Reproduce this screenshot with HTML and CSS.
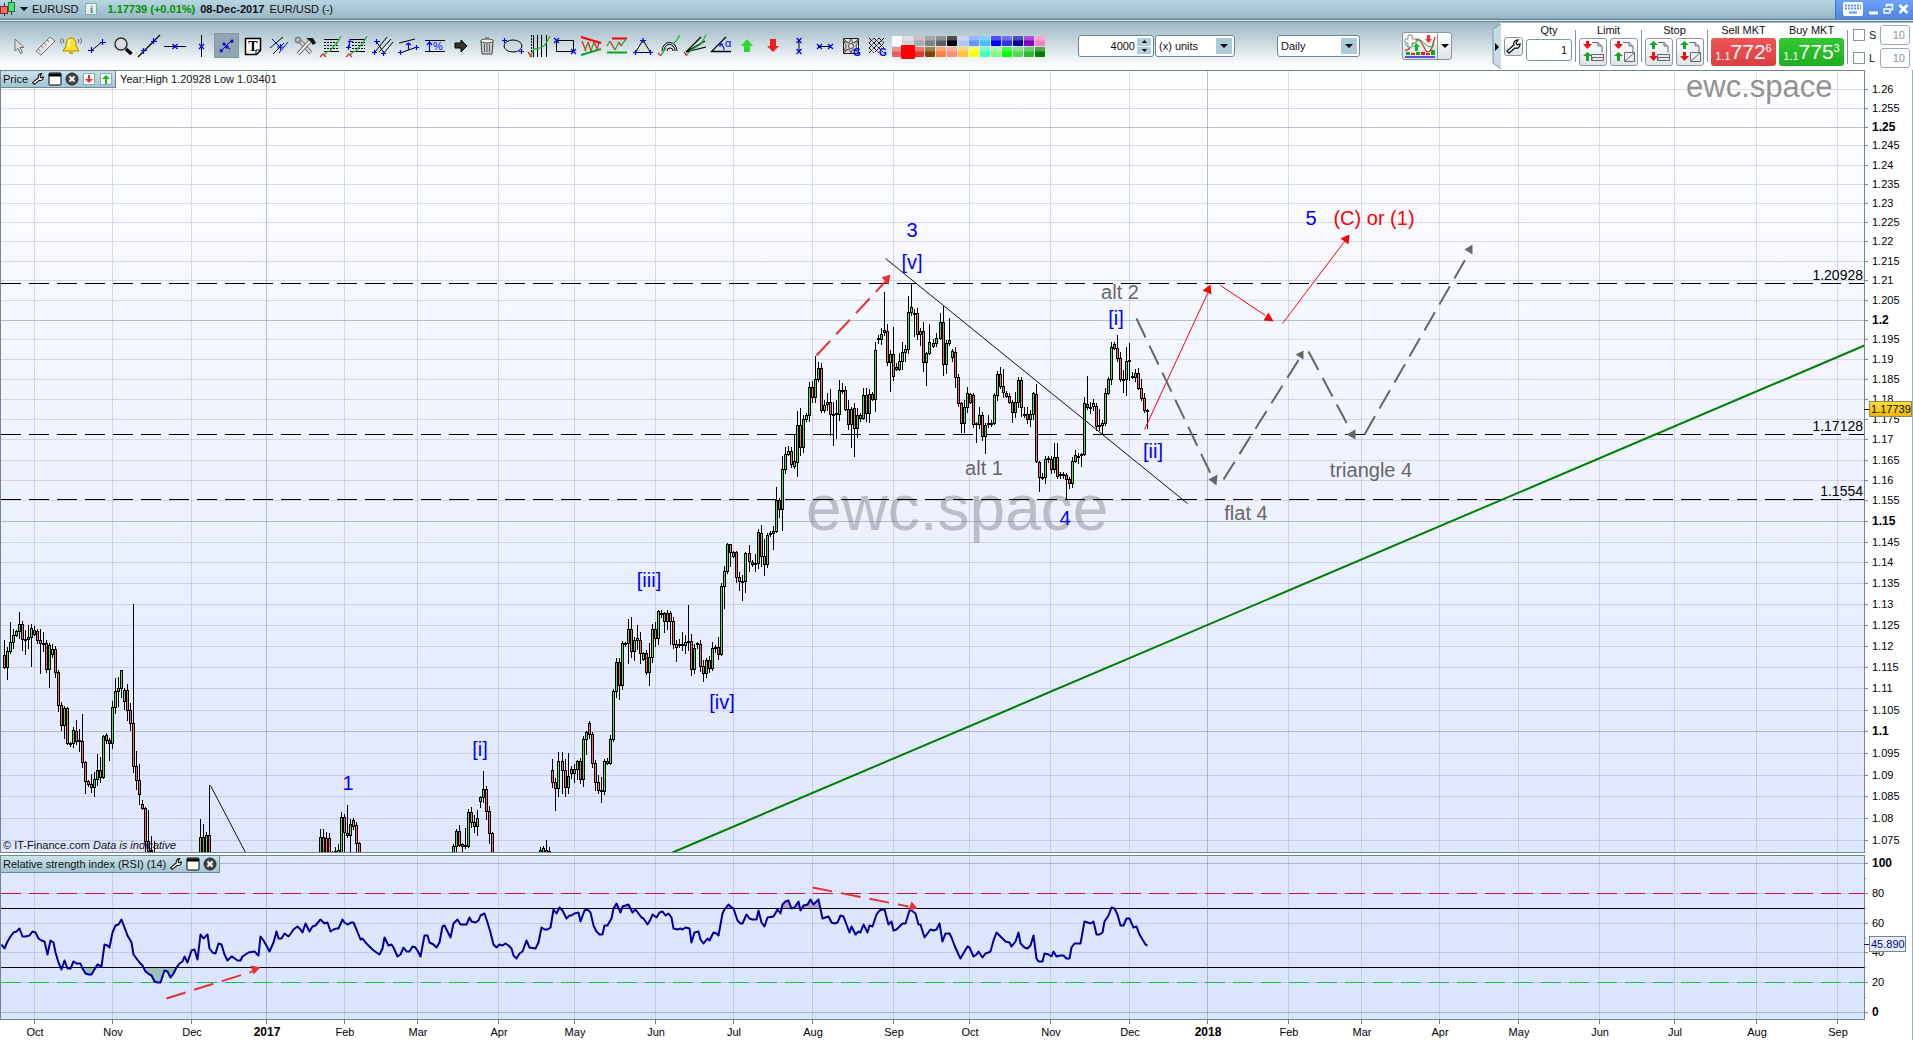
FILE: index.html
```html
<!DOCTYPE html>
<html lang="en">
	<head>
		<meta charset="utf-8">
		<title>EURUSD</title>
		<link rel="stylesheet" href="styles.css">
	</head>
	<body>
		<header class="titlebar">
			<svg class="candle-logo" width="18" height="19" viewBox="0 0 18 19"><path d="M4.5 4v13M11.5 0v16" stroke="#333"/><rect x="0.500" y="7.500" width="7" height="7" fill="#f07070" stroke="#a02020"/><rect x="8.500" y="3.500" width="6" height="9" fill="#50e070" stroke="#108030"/></svg>
			<span class="caret"></span>
			<span class="symbol">EURUSD</span>
			<button class="info" title="Info">i</button>
			<span class="quote">1.17739 (+0.01%)</span>
			<span class="date">08-Dec-2017</span>
			<span class="pair">EUR/USD (-)</span>
			<div class="window-buttons">
				<button title="Keyboard"><svg width="22" height="16" viewBox="0 0 22 16"><rect x="1" y="1" width="20" height="14" rx="2" fill="#fff"/><path d="M3 4.500h16M3 7.500h16" stroke="#5e97f0" stroke-width="2" stroke-dasharray="2 1"/><path d="M7 11.500h8" stroke="#5e97f0" stroke-width="2"/></svg></button>
				<button title="Minimize"><svg width="11" height="12" viewBox="0 0 11 12"><path d="M1 10h9" stroke="#fff" stroke-width="3"/></svg></button>
				<button title="Restore"><svg width="11" height="12" viewBox="0 0 11 12"><path d="M3.500 4V1.500h6v5H7.500M3 2h7" fill="none" stroke="#fff" stroke-width="1.500"/><path d="M1 6h6v4H1z" fill="none" stroke="#fff" stroke-width="1.500"/></svg></button>
				<button title="Close"><svg width="11" height="12" viewBox="0 0 11 12"><path d="M1.500 2l8 8M9.500 2l-8 8" stroke="#fff" stroke-width="2.500"/></svg></button>
			</div>
		</header>

		<div class="toolbar">
			<div class="tools">
				<button title="Pointer"><svg viewBox="0 0 24 24"><path d="M8 5v12l3-2.500 2.500 5 2-1-2.500-5h4z" fill="#ddd" stroke="#777"/></svg></button>
				<button title="Ruler"><svg viewBox="0 0 24 24"><path d="M3 17L17 3l5 4L8 21z" fill="#e8e8e8" stroke="#777"/><path d="M5 15l2.500 2M8 12l2.500 2M11 9l2.500 2M14 6l2.500 2" stroke="#777"/></svg></button>
				<button title="Alert"><svg viewBox="0 0 24 24"><path d="M12 4c-4 0-5 4-5 8l-3 5h16l-3-5c0-4-1-8-5-8z" fill="#ffe02a" stroke="#a98200"/><path d="M10 18h4v2h-4z" fill="#d8a800"/><path d="M9 8c0-1 1-2 2-2v7H9z" fill="#fff9b0"/><path d="M5 5c-1 1-1 3 0 4M3 4c-2 2-2 4 0 6M19 5c1 1 1 3 0 4M21 4c2 2 2 4 0 6" fill="none" stroke="#666"/></svg></button>
				<button title="Segment"><svg viewBox="0 0 24 24"><path d="M7 16l10-8" stroke="#000"/><path class="cross" d="M3 16.500h6M6.500 13v6M15 8.500h6M17.500 5v6"/></svg></button>
				<button title="Zoom"><svg viewBox="0 0 24 24"><circle cx="10" cy="10" r="6" fill="#ddd" stroke="#333" stroke-width="1.500"/><path d="M15 15l5.500 5" stroke="#000" stroke-width="3.500"/></svg></button>
				<button title="Line"><svg viewBox="0 0 24 24"><path d="M1 23L23 1" stroke="#000" stroke-width="1.300"/><path class="cross" d="M4 16.500h6M6.500 14v6M14 7.500h6M16.500 4v6"/></svg></button>
				<button title="Horizontal line"><svg viewBox="0 0 24 24"><path d="M1 12.500h22" stroke="#000"/><path class="cross" d="M9.500 10l5 5M14.500 10l-5 5"/></svg></button>
				<button title="Vertical line"><svg viewBox="0 0 24 24"><path d="M12.500 1v22" stroke="#000"/><path class="cross" d="M10 10l5 5M15 10l-5 5"/></svg></button>
				<button class="selected" title="Arrow segment"><svg viewBox="0 0 24 24"><path d="M6 18L18 6M8 10l8 6M9 15l6-6" stroke="#000" stroke-width="0.800"/><path d="M5 16h3v3H5zM16 6h3v3h-3zM11 12h3v3h-3zM8 9h3v3H8z" fill="#00f"/></svg></button>
				<button title="Text"><svg viewBox="0 0 24 24"><path d="M4.500 4.500h15v12l-4 4h-11z" fill="#fff" stroke="#000" stroke-width="1.500"/><path d="M15 20v-4h4" fill="none" stroke="#000"/><text x="12" y="17" text-anchor="middle" class="glyph-serif">T</text></svg></button>
				<button title="Channel"><svg viewBox="0 0 24 24"><path d="M3 14L16 3M6 20L17 9" stroke="#000"/><path d="M12 19L21 8M5 5l8 8" stroke="#00f"/><path class="cross" d="M10 13h6M13.500 10v6"/></svg></button>
				<button title="Tools"><svg viewBox="0 0 24 24"><path d="M6 6l12 13" stroke="#666" stroke-width="4"/><path d="M6 6l12 13" stroke="#ddd" stroke-width="2"/><path d="M5 20L17 7" stroke="#666" stroke-width="4"/><path d="M5 20L17 7" stroke="#eee" stroke-width="2"/><path d="M13 4l7 0 3 5-3 2-3-4z" fill="#111"/><circle cx="5" cy="6" r="2.500" fill="none" stroke="#888" stroke-width="2"/></svg></button>
				<button title="Retracement"><svg viewBox="0 0 24 24"><path d="M5 5.500h15M5 17.500h15" stroke="#000"/><path d="M5 8.500h15M5 11.500h15M5 14.500h15" stroke="#000" stroke-dasharray="2 1"/><path class="up" d="M5 21l3-3 3-1 4-5 3-3 4-7"/><path class="down" d="M1 23l3-3 3 3"/></svg></button>
				<button title="Extension"><svg viewBox="0 0 24 24"><path d="M5 5.500h15M5 17.500h15" stroke="#000"/><path d="M7 8.500h13M7 11.500h13M7 14.500h13" stroke="#000" stroke-dasharray="2 1"/><path class="up" d="M5 21l3-3 3-1 4-5 3-3 4-7"/><path class="down" d="M1 23l3-3 3 3"/><path class="cross" d="M1 13.500h5M3.500 11v5M4 13l1-8M3 7.500h5"/></svg></button>
				<button title="Pitchfork"><svg viewBox="0 0 24 24"><path d="M4 18L16 3M8 18L20 5M13 19L22 8M5 7l8 12" stroke="#000"/><path class="cross" d="M3 7.500h6M5.500 5v5M1 18.500h5M3.500 16v5M10 19.500h5M12.500 17v5"/></svg></button>
				<button title="Parallel"><svg viewBox="0 0 24 24"><path d="M2 9l16-4M3 19l17-6" stroke="#000"/><path class="cross" d="M1 18.500h5M3.500 16v5M17 13.500h5M19.500 11v5M11.500 16V9M9 11l2.500-2 2.500 2"/></svg></button>
				<button title="Percent"><svg viewBox="0 0 24 24"><path d="M2 6.500h20M2 17.500h20" stroke="#000"/><path class="cross" d="M6.500 17V9M4 11l2.500-3L9 11"/><text x="10" y="16" class="glyph">%</text></svg></button>
				<button title="Forward"><svg viewBox="0 0 24 24"><path d="M6 9h6V6l6 6-6 6v-4H6z" fill="#333" stroke="#000"/></svg></button>
				<button title="Delete"><svg viewBox="0 0 24 24"><path d="M6 8h12l-1 12H7z" fill="#ccc" stroke="#444"/><ellipse cx="12" cy="7" rx="6.500" ry="2" fill="#eee" stroke="#444"/><path d="M10 4h4M9.500 10v8M12 10v8M14.500 10v8" stroke="#555"/></svg></button>
				<button title="Ellipse"><svg viewBox="0 0 24 24"><ellipse cx="12" cy="12" rx="9" ry="6" fill="#ccd" fill-opacity="0.400" stroke="#000"/><path class="cross" d="M1 6.500h5M3.500 4v5M18 17.500h5M20.500 15v5"/></svg></button>
				<button title="Cycles"><svg viewBox="0 0 24 24"><path d="M6.500 1v22M10.500 1v22M14.500 1v22M19.500 1v22" stroke="#000"/><path d="M4.500 1v22" stroke="#000" stroke-dasharray="2 1"/><path class="up" d="M3 23l4-8 6-1 5-3 5-9"/><path class="down" d="M1 18l3 4 1 1"/></svg></button>
				<button title="Rectangle"><svg viewBox="0 0 24 24"><path d="M3.500 6.500h17v11h-17z" fill="none" stroke="#000"/><path class="cross" d="M1 4l5 5M6 4L1 9M18 15l5 5M23 15l-5 5"/></svg></button>
				<button title="Pennant"><svg viewBox="0 0 24 24"><path d="M2 3l20 6" stroke="#f00" stroke-width="2"/><path d="M2 21l20-6" stroke="#0a2" stroke-width="2"/><path class="up" d="M6 17l3-9M12 17l3-9"/><path class="down" d="M3 7l4 10M9 8l3 9M15 8l3 7 2-6"/></svg></button>
				<button title="Support"><svg viewBox="0 0 24 24"><path d="M7 4.500h15" stroke="#f00" stroke-width="2"/><path d="M2 18.500h20" stroke="#0a2" stroke-width="2"/><path class="up" d="M2 12l3-5M10 16l4-8M16 12l5-7"/><path class="down" d="M5 7l5 9M14 8l2 4"/></svg></button>
				<button title="Triangle"><svg viewBox="0 0 24 24"><path d="M12 6L4.500 18.500h15z" fill="none" stroke="#000"/><path class="cross" d="M9 6.500h6M12 4v5M2 18.500h5M4.500 16v5M17 18.500h5M19.500 16v5"/></svg></button>
				<button title="Arcs"><svg viewBox="0 0 24 24"><path d="M5 17a7 8 0 0 1 15 0M7 17a5 6 0 0 1 11 0M10 17a3 3 0 0 1 6 0" fill="none" stroke="#000"/><path class="up" d="M4 21l5-7M16 10l3-3 4-6"/><path class="down" d="M1 19l3 3"/></svg></button>
				<button title="Fan"><svg viewBox="0 0 24 24"><path d="M3 18L18 3M3 18L22 7M3 18l20-5M3 18l19-11" stroke="#000" stroke-width="1.200"/><path class="up" d="M3 21l7-6 8-5 5-9"/><path class="down" d="M1 18l3 4"/></svg></button>
				<button title="Angle"><svg viewBox="0 0 24 24"><path d="M17 3L2.500 17.500H22" fill="none" stroke="#000" stroke-width="1.300"/><path class="cross" d="M15 16c0-3-1-5-4-6M11 13v-3h3"/><text x="16" y="13" class="glyph">α</text></svg></button>
				<button title="Up"><svg viewBox="0 0 24 24"><path d="M12 5l6 7h-3v6H9v-6H6z" fill="#2bdc2b"/></svg></button>
				<button title="Down"><svg viewBox="0 0 24 24"><path d="M12 18l6-6h-3V5H9v7H6z" fill="#e82020"/></svg></button>
				<button title="Vertical distance"><svg viewBox="0 0 24 24"><path d="M12 6v12" stroke="#000"/><path class="cross" d="M9.500 4l5 5M14.500 4l-5 5M9.500 15l5 5M14.500 15l-5 5"/></svg></button>
				<button title="Horizontal distance"><svg viewBox="0 0 24 24"><path d="M5 12.500h13" stroke="#000"/><path class="cross" d="M4 10l5 5M9 10l-5 5M15 10l5 5M20 10l-5 5"/></svg></button>
				<button title="Gann square"><svg viewBox="0 0 24 24"><path d="M4.500 4.500h15v15h-15z" fill="#ddd" stroke="#222"/><path d="M4.500 4.500l15 15M19.500 4.500l-15 15" stroke="#444" stroke-width="0.800"/><path d="M12 5l2 4 5-2-2 5 2 5-5-2-2 4-2-4-5 2 2-5-2-5 5 2z" fill="#ccc" stroke="#333" stroke-width="0.800"/><circle cx="12" cy="12" r="2.500" fill="#eee" stroke="#444"/><text x="14" y="22" class="glyph-bold">G</text></svg></button>
				<button title="Gann grid"><svg viewBox="0 0 24 24"><path d="M4 9l5-5M4 14L14 4M4 19L19 4M10 18l9-9M14 4l5 5M9 4l10 10M4 4l14 14M4 9l10 10M4 14l5 5" stroke="#000" stroke-dasharray="5 1"/><text x="14" y="22" class="glyph-bold">G</text></svg></button>
			</div>

			<div class="palette" id="palette"></div>

			<div class="units">
				<div class="field spin">
					<input type="text" value="4000" aria-label="Amount of data">
					<div class="spin-buttons">
						<button title="More"><svg width="5" height="3" viewBox="0 0 5 3"><path d="M0 3h5L2.500 0z"/></svg></button>
						<button title="Less"><svg width="5" height="3" viewBox="0 0 5 3"><path d="M0 0h5L2.500 3z"/></svg></button>
					</div>
				</div>
				<select class="field unit-select" aria-label="Units"><option>(x) units</option></select>
			</div>
			<select class="field period-select" aria-label="Period"><option>Daily</option></select>

			<div class="indicator">
				<button title="Indicators"><svg width="32" height="24" viewBox="0 0 32 24"><path d="M1 16C6 16 7 4 13 4s7 14 11 14 4-12 7-16v8c-2 5-3 8-7 8-5 0-6-11-11-10S6 18 1 18z" fill="#c4ddc0"/><path d="M1 16C7 18 7 5 13 5s7 13 11 13 5-9 7-15" fill="none" stroke="#c33" stroke-width="1.200"/><path d="M1 10c6 8 8-4 14-4s5 9 15 6" fill="none" stroke="#2a5"/><path d="M4 1h4v4h4v4H8v4H4V9H1V5h3z" fill="#fff" stroke="#888"/><path d="M23 1h3v4h2l-3.500 4L21 5h2z" fill="#e33"/><path d="M11 17v-4H9l3.500-4L16 13h-2v4z" fill="#1b2"/><path d="M2 18h4v3H2zM12 18h4v3h-4zM27 16h4v5h-4z" fill="#1a1"/><path d="M7 19h4v2H7zM17 18h4v3h-4zM22 19h4v2h-4z" fill="#d22"/><path d="M1 23h30" stroke="#22d" stroke-width="1.500"/></svg></button>
				<button class="drop" title="More indicators"><span class="caret"></span></button>
			</div>

			<div class="order-panel">
				<svg class="panel-edge" width="9" height="47" viewBox="0 0 9 47"><path d="M9 1L1 6v34l8 6" fill="#c8dbe4" stroke="#7f97a5"/><path d="M3 20l4 4-4 4z"/></svg>
				<button class="small-button" title="Settings"><svg width="17" height="17" viewBox="0 0 17 17"><path class="wrench" d="M2 13l7-6c-1-3 1-5 4-5l-2 3 1 2 3-1c0 3-2 5-5 4l-6 5z"/></svg></button>
				<div class="order-col qty">
					<label for="qty">Qty</label>
					<input id="qty" type="text" value="1">
				</div>
				<div class="order-col line">
					<span>Limit</span>
					<div class="pair-buttons">
						<button title="Limit"><svg viewBox="0 0 24 24"><path class="sheet" d="M11 2.500h6l4 4v6M11 21V17M17 2v4h4"/><path class="sheet" d="M10.500 14.500h12v6h-12zM10.500 17.500h12"/><path d="M5 1h3v3h3l-4.500 5L2 4h3z" fill="#e11"/><path d="M5 21v-5H2l4.500-4 4.500 4H8v5z" fill="#1a2"/></svg></button>
						<button title="Attached limit"><svg viewBox="0 0 24 24"><path class="sheet" d="M11 2.500h6l4 4v6M17 2v4h4"/><path class="sheet" d="M12.500 12.500h10v9h-10zM22 13l-9 8"/><path d="M5 1h3v3h3l-4.500 5L2 4h3z" fill="#e11"/><path d="M5 21v-5H2l4.500-4 4.500 4H8v5z" fill="#1a2"/></svg></button>
					</div>
				</div>
				<div class="order-col line">
					<span>Stop</span>
					<div class="pair-buttons">
						<button title="Stop"><svg viewBox="0 0 24 24"><path class="sheet" d="M11 2.500h6l4 4v6M11 21V17M17 2v4h4"/><path class="sheet" d="M10.500 14.500h12v6h-12zM10.500 17.500h12"/><path d="M5 9V5H2l4.500-4L11 5H8v4z" fill="#1a2"/><path d="M5 12h3v4h3l-4.500 5L2 16h3z" fill="#e11"/></svg></button>
						<button title="Attached stop"><svg viewBox="0 0 24 24"><path class="sheet" d="M11 2.500h6l4 4v6M17 2v4h4"/><path class="sheet" d="M12.500 12.500h10v9h-10zM22 13l-9 8"/><path d="M5 9V5H2l4.500-4L11 5H8v4z" fill="#1a2"/><path d="M5 12h3v4h3l-4.500 5L2 16h3z" fill="#e11"/></svg></button>
					</div>
				</div>
				<div class="order-col line">
					<span>Sell MKT</span>
					<button class="deal sell"><small>1.1</small>772<sup>6</sup></button>
				</div>
				<div class="order-col last">
					<span>Buy MKT</span>
					<button class="deal buy"><small>1.1</small>775<sup>3</sup></button>
				</div>
				<div class="stops">
					<div><input type="checkbox" id="s"><label for="s">S</label><input type="text" value="10" aria-label="Stop distance"></div>
					<div><input type="checkbox" id="l"><label for="l">L</label><input type="text" value="10" aria-label="Limit distance"></div>
				</div>
			</div>
		</div>

		<main class="charts">
			<section class="pane price-pane">
				<svg class="plot" id="price"></svg>
				<div class="pane-head">
					<div class="pane-tab">
						<span>Price</span>
						<button title="Settings"><svg width="14" height="14" viewBox="0 0 17 17"><path class="wrench" d="M2 13l7-6c-1-3 1-5 4-5l-2 3 1 2 3-1c0 3-2 5-5 4l-6 5z"/></svg></button>
						<button title="Window"><svg width="14" height="14" viewBox="0 0 14 14"><rect x="1" y="1" width="12" height="12" rx="1" fill="#fff" stroke="#000"/><path d="M1 3h12" stroke="#000" stroke-width="3"/></svg></button>
						<button title="Close"><svg width="14" height="14" viewBox="0 0 14 14"><circle cx="7" cy="7" r="6" fill="#444" stroke="#222"/><path d="M4.500 4.500l5 5M9.500 4.500l-5 5" stroke="#fff" stroke-width="2"/></svg></button>
						<button title="Move down"><svg width="14" height="14" viewBox="0 0 14 14"><path d="M1.500 1.500h11v11h-11z" fill="#fff" stroke="#8aa"/><path d="M6 3h2v4h3l-4 4-4-4h3z" fill="#e33"/></svg></button>
						<button title="Move up"><svg width="14" height="14" viewBox="0 0 14 14"><path d="M1.500 1.500h11v11h-11z" fill="#fff" stroke="#8aa"/><path d="M6 12h2V7h3L7 3 3 7h3z" fill="#1b1"/></svg></button>
					</div>
					<span class="range">Year:High 1.20928 Low 1.03401</span>
				</div>
				<div class="copyright">© IT-Finance.com <i>Data is indicative</i></div>
			</section>
			<section class="pane rsi-pane">
				<svg class="plot" id="rsi"></svg>
				<div class="pane-head">
					<div class="pane-tab">
						<span>Relative strength index (RSI) (14)</span>
						<button title="Settings"><svg width="14" height="14" viewBox="0 0 17 17"><path class="wrench" d="M2 13l7-6c-1-3 1-5 4-5l-2 3 1 2 3-1c0 3-2 5-5 4l-6 5z"/></svg></button>
						<button title="Window"><svg width="14" height="14" viewBox="0 0 14 14"><rect x="1" y="1" width="12" height="12" rx="1" fill="#fff" stroke="#000"/><path d="M1 3h12" stroke="#000" stroke-width="3"/></svg></button>
						<button title="Close"><svg width="14" height="14" viewBox="0 0 14 14"><circle cx="7" cy="7" r="6" fill="#444" stroke="#222"/><path d="M4.500 4.500l5 5M9.500 4.500l-5 5" stroke="#fff" stroke-width="2"/></svg></button>
					</div>
				</div>
			</section>
			<svg class="time-axis" id="time"></svg>
		</main>
		<script src="chart.js"></script>
	</body>
</html>
```

FILE: styles.css
```css
* {
	box-sizing: border-box;
}

body {
	margin: 0;
	height: 100vh;
	display: flex;
	flex-direction: column;
	overflow: hidden;
	background: #fff;
	color: #111;
	font-family: "Liberation Sans", Arial, sans-serif;
	font-size: 11px;
}

button, input, select {
	font-family: inherit;
	font-size: inherit;
	color: inherit;
	margin: 0;
}

button {
	padding: 0;
	border: none;
	background: none;
	cursor: pointer;
}

svg {
	display: block;
}

.caret {
	width: 0;
	height: 0;
	border: 4px solid transparent;
	border-top-color: #000;
	border-bottom-width: 0;
}

/* title bar */
.titlebar {
	display: flex;
	align-items: center;
	height: 22px;
	flex: none;
	padding-bottom: 4px;
	border-bottom: 1px solid #6d8797;
	background: linear-gradient(#b5d5e2, #9bb9c7 18px, #6d8797 19px, #6d8797 20px, #dce8ef 20px);
	white-space: nowrap;
}

.symbol {
	margin-left: 4px;
}

.titlebar .caret {
	margin-left: 2px;
}

.info {
	width: 12px;
	height: 12px;
	margin: 0 10px 0 7px;
	border: 1px solid #8aa;
	background: #e4edf0;
	color: #678;
	font-family: "Liberation Serif", serif;
	font-weight: bold;
	line-height: 10px;
}

.quote {
	color: #009400;
	font-weight: bold;
}

.date {
	margin: 0 5px;
	font-weight: bold;
}

.window-buttons {
	display: flex;
	align-items: center;
	align-self: flex-start;
	gap: 4px;
	height: 19px;
	margin-left: auto;
	padding: 0 4px 2px 6px;
	border-left: 1px solid #3f73cc;
	background: linear-gradient(#6aa3fa, #4f85e6);
}

/* tool bar */
.toolbar {
	display: flex;
	align-items: center;
	height: 48px;
	flex: none;
	padding-left: 6px;
	background: linear-gradient(#9bb7c5, #fff 44px);
}

.tools {
	display: flex;
}

.tools button {
	width: 26px;
	padding: 1px;
}

.tools .selected {
	width: 25px;
	height: 25px;
	margin-right: 1px;
	background: #91a6b3;
	border: 1px solid #8397a4;
	padding: 0;
}

.cross {
	fill: none;
	stroke: #00f;
	stroke-width: 1.2px;
}

.up {
	fill: none;
	stroke: #1db52d;
	stroke-width: 1.3px;
}

.down {
	fill: none;
	stroke: #f02020;
	stroke-width: 1.3px;
}

.glyph {
	font-size: 11px;
	fill: #00f;
}

.glyph-bold {
	font-size: 10px;
	font-weight: bold;
	fill: #00f;
}

.glyph-serif {
	font-family: "Liberation Serif", serif;
	font-size: 14px;
	font-weight: bold;
}

.palette {
	display: grid;
	grid-template-columns: repeat(14, 10px);
	gap: 1px;
	margin-left: 2px;
}

.palette button {
	height: 10px;
	border-radius: 1px;
	background-image: linear-gradient(rgba(255, 255, 255, 0.3), rgba(255, 255, 255, 0.3) 4px, transparent 5px);
}

.palette .current {
	margin: -2px;
	height: 14px;
	z-index: 1;
	background-image: none;
}

.field {
	height: 22px;
	border: 1px solid #6f8590;
	border-radius: 3px;
	background-color: #fff;
}

.units {
	display: flex;
	margin-left: 33px;
	gap: 1px;
}

.spin {
	display: flex;
	width: 76px;
	padding: 2px;
}

.spin input {
	flex: 1;
	width: 0;
	padding: 0 2px;
	border: none;
	text-align: right;
}

.spin-buttons {
	display: grid;
	gap: 1px;
	width: 14px;
}

.spin-buttons button {
	display: grid;
	place-items: center;
	background: #b0cfdb;
}

select {
	appearance: none;
	padding: 0 20px 0 3px;
	background-image: url("data:image/svg+xml,%3Csvg xmlns='http://www.w3.org/2000/svg' width='16' height='16'%3E%3Crect width='16' height='16' fill='%23aaccd8'/%3E%3Cpath d='M4 6h8l-4 4z'/%3E%3C/svg%3E");
	background-repeat: no-repeat;
	background-position: right 2px center;
}

.unit-select {
	width: 80px;
}

.period-select {
	width: 83px;
	margin-left: 42px;
}

.indicator {
	display: flex;
	height: 28px;
	margin: 0 auto 0 42px;
	border: 1px solid #8a979e;
	border-radius: 3px;
	background: linear-gradient(#fff, #dfe3e6);
}

.indicator button {
	display: grid;
	place-items: center;
	width: 34px;
}

.indicator .drop {
	width: 14px;
	border-left: 1px solid #8a979e;
}

/* order panel */
.order-panel {
	display: flex;
	align-items: center;
	height: 47px;
	margin-top: 1px;
	background: linear-gradient(90deg, transparent 8px, #fff 8px);
}

.small-button {
	display: grid;
	place-items: center;
	width: 19px;
	height: 19px;
	margin-left: 3px;
	border: 1px solid #8a979e;
	border-radius: 3px;
	background: linear-gradient(#fff, #e4e6e8);
}

.wrench {
	fill: #fff;
	stroke: #111;
	stroke-width: 1.3px;
}

.order-col {
	display: flex;
	flex-direction: column;
	align-items: center;
	gap: 2px;
	height: 45px;
	padding: 0 3px;
	white-space: nowrap;
}

.order-col > span, .order-col > label {
	line-height: 12px;
}

.line {
	padding-left: 4px;
	background: linear-gradient(#7f97a5, #7f97a5) no-repeat left 6px / 1px 32px;
}

.last {
	padding-left: 0;
}

.qty input {
	width: 46px;
	height: 22px;
	margin-top: 1px;
	padding: 0 4px;
	border: 1px solid #7f97a5;
	border-radius: 3px;
	text-align: right;
}

.pair-buttons {
	display: flex;
	gap: 3px;
}

.pair-buttons button {
	width: 28px;
	height: 28px;
	padding: 1px;
	border: 1px solid #8a979e;
	border-radius: 3px;
	background: linear-gradient(#fff, #e2e4e6);
}

.sheet {
	fill: none;
	stroke: #667;
}

.deal {
	display: flex;
	justify-content: center;
	width: 65px;
	height: 28px;
	border-radius: 3px;
	color: #fff;
	font-size: 21px;
	line-height: 28px;
}

.deal small {
	font-size: 11px;
	line-height: 36px;
}

.deal sup {
	font-size: 11px;
	line-height: 20px;
	vertical-align: baseline;
}

.sell {
	background: linear-gradient(#f05555, #d84042);
}

.buy {
	background: linear-gradient(#33c833, #1fae1f);
}

.stops {
	display: grid;
	gap: 3px;
	padding: 0 3px 0 6px;
	background: linear-gradient(#7f97a5, #7f97a5) no-repeat left center / 1px 34px;
}

.stops div {
	display: flex;
	align-items: center;
}

.stops label {
	width: 11px;
	margin-left: 4px;
}

.stops input[type="checkbox"] {
	appearance: none;
	width: 12px;
	height: 12px;
	border: 1px solid #7f97a5;
	background: #fff;
}

.stops input[type="text"] {
	width: 30px;
	height: 20px;
	padding: 0 4px;
	border: 1px solid #9aabb5;
	border-radius: 3px;
	color: #8494a0;
	text-align: right;
}

/* charts */
.charts {
	flex: 1;
	min-height: 0;
	display: flex;
	flex-direction: column;
	border-right: 1px solid #93b4c0;
}

.pane {
	position: relative;
	min-height: 0;
}

.price-pane {
	flex: 785;
}

.rsi-pane {
	flex: 165;
}

.plot {
	width: 100%;
	height: 100%;
	overflow: visible;
}

.pane-head {
	position: absolute;
	left: 0;
	top: 0;
	display: flex;
	align-items: center;
	gap: 4px;
}

.pane-tab {
	display: flex;
	align-items: center;
	gap: 3px;
	height: 18px;
	padding: 0 2px;
	border: 1px solid #6f8a96;
	background: linear-gradient(#cbe3ec, #a2c4d2);
}

.copyright {
	position: absolute;
	left: 3px;
	bottom: 3px;
	line-height: 14px;
}

.time-axis {
	flex: none;
	width: 100%;
	height: 20px;
}

/* drawing */
.grid {
	stroke: #7878aa;
	stroke-opacity: 0.25;
}

.grid-major {
	stroke: #6a7696;
	stroke-opacity: 0.45;
}

.frame, .tick {
	fill: none;
	stroke: #6f8794;
}

.sharp {
	shape-rendering: crispEdges;
}

.level {
	stroke: #000;
	stroke-dasharray: 20 8;
}

.level-text {
	font-size: 14px;
}

.axis-bold {
	font-size: 12px;
	font-weight: bold;
}

.blue {
	font-size: 20px;
	fill: #00f;
}

.red {
	font-size: 20px;
	fill: #f00;
}

.gray {
	font-size: 20px;
	fill: #666;
}

.mark-big {
	font-size: 64px;
	fill: #808080;
	fill-opacity: 0.45;
}

.mark-small {
	font-size: 31px;
	fill: #929292;
}

.rsi-line {
	fill: none;
	stroke: #00009c;
	stroke-width: 2px;
	stroke-linejoin: round;
}
```

FILE: chart.js
```js
// plot area is laid out on a 1864 unit wide sheet, the price axis takes the last 48px
var SHEET = 1864, AXIS = 48;

var colors = [
	"#ffffff", "#d4d4d4", "#aaaaaa", "#808080", "#606060", "#000000", "#b4c4ff", "#6699ff", "#40c0ff", "#0000ff", "#3333e0", "#0000a0", "#8000c0", "#ff80c0",
	"#e06060", "#ff0000", "#e63535", "#804000", "#ff8040", "#ff8c7a", "#ffc040", "#ffff00", "#40ffc0", "#80ff80", "#00ff00", "#50d850", "#30b830", "#008000"
];

var months = [
	[34, "Oct"], [112, "Nov"], [191, "Dec"], [266, "2017"], [344, "Feb"], [417, "Mar"], [498, "Apr"], [574, "May"],
	[655, "Jun"], [733, "Jul"], [812, "Aug"], [893, "Sep"], [969, "Oct"], [1050, "Nov"], [1129, "Dec"], [1207, "2018"],
	[1288, "Feb"], [1361, "Mar"], [1439, "Apr"], [1518, "May"], [1599, "Jun"], [1674, "Jul"], [1756, "Aug"], [1837, "Sep"]
];

// x, high, body top, body bottom, low, green or red
var candles = "4,640,655,667,668,r 7,647,651,667,679,g 10,622,642,651,653,g 13,629,635,642,648,g 16,630,631,635,636,g 19,612,624,631,638,g 22,621,624,639,650,r 25,630,639,640,654,r 28,625,637,639,648,g 31,624,628,637,666,g 34,626,630,634,635,g 37,629,631,640,643,r 40,629,640,643,673,r 43,632,643,644,651,r 46,640,643,669,672,r 49,643,645,669,687,g 52,644,649,654,657,g 55,646,649,672,677,r 58,670,672,705,711,r 61,702,705,725,730,r 64,706,708,725,738,g 67,707,708,743,744,r 70,742,743,744,746,r 73,727,730,743,747,g 76,720,731,741,744,r 79,729,740,741,751,r 82,714,741,762,767,r 85,761,762,781,793,r 88,780,781,784,786,r 91,774,784,787,792,r 94,772,779,787,796,g 97,754,770,779,785,g 100,757,770,777,782,r 103,735,736,777,778,g 106,733,735,740,743,r 109,738,740,743,760,r 112,701,707,743,748,g 115,678,691,707,713,g 118,677,688,691,706,g 121,670,670,688,697,g 124,688,690,701,709,g 127,684,690,710,720,r 130,703,710,723,730,r 133,604,723,766,772,r 136,751,766,780,789,r 139,764,780,794,804,r 142,800,804,808,809,r 145,807,808,841,852,r 148,810,841,851,852,r 151,836,850,851,852,r 154,841,852,852,852,r "
	+ "200,819,837,852,852,g 203,824,837,852,852,r 206,832,835,852,852,g 209,785,835,852,852,r 320,829,837,852,852,g 323,829,837,852,852,r 326,832,838,852,852,r 329,833,838,852,852,r 332,851,852,852,852,r 335,847,851,852,852,g 338,844,850,852,852,g 341,812,817,852,852,g 344,814,817,832,852,r 347,805,833,835,837,r 350,819,824,835,852,g 353,818,820,826,829,r 356,822,825,843,852,r 359,842,843,852,852,r 453,844,846,852,852,g 456,829,831,846,852,g 459,825,831,845,846,r 462,843,844,846,852,r 465,828,845,846,848,r 468,809,812,846,847,g 471,807,812,822,827,r 474,815,822,826,832,r 477,810,818,826,835,g 480,796,797,801,807,g 483,771,789,797,802,g 486,786,789,811,819,r 489,806,811,833,843,r 492,832,833,852,852,r 540,847,850,852,852,g 543,846,848,852,852,g 546,840,850,852,852,r 549,847,851,852,852,g "
	+ "552,759,770,782,787,r 555,778,782,788,810,r 558,752,761,788,796,g 562,752,761,770,793,r 565,759,770,787,796,r 568,753,776,787,793,g 571,766,769,773,778,r 574,764,769,773,782,g 577,760,761,769,779,g 580,758,761,779,783,r 583,736,739,779,786,g 586,731,732,739,754,g 589,721,723,734,738,r 592,732,734,763,767,r 595,760,763,782,790,r 598,775,782,790,793,r 601,777,790,791,802,r 604,759,761,791,794,g 607,758,761,763,764,r 610,735,739,763,764,g 613,689,691,739,741,g 616,658,662,691,697,g 619,658,662,685,699,r 622,641,643,685,689,g 625,642,643,644,646,r 628,619,629,643,663,g 631,617,629,651,657,r 634,637,640,651,660,g 637,625,638,640,649,r 640,632,640,653,663,r 643,652,653,659,660,g 646,650,653,672,674,r 649,643,657,672,685,g 652,624,629,657,662,g 655,622,629,638,646,r 658,610,611,638,644,g 661,610,613,614,617,r 664,612,613,621,632,r 667,610,613,621,629,g 670,611,613,621,644,r 673,617,621,644,648,r 676,640,644,647,661,r 679,639,644,645,647,r 682,632,644,645,650,r 685,635,642,645,653,g 688,605,641,642,650,r 691,634,641,669,675,r 694,644,648,669,673,g 697,642,643,644,648,r 700,640,644,666,671,r 703,660,666,673,681,r 706,658,660,673,677,g 709,656,660,668,672,r 712,642,648,668,670,g 715,645,647,648,652,r 718,637,647,654,659,r 721,583,586,654,655,g 724,566,571,586,608,g 727,543,544,571,573,g 730,544,544,552,566,r 733,551,552,556,557,g 736,551,552,577,582,r 739,572,577,581,590,r 742,575,581,582,600,r 745,552,553,581,592,g 749,545,553,561,571,r 752,560,562,564,566,g 755,554,563,564,571,r 758,529,532,563,568,g 761,525,533,556,566,r 764,539,556,564,575,r 767,533,535,564,567,g 770,531,533,534,536,r 773,526,531,533,549,g 776,487,500,531,532,g 779,498,500,509,517,r "
	+ "782,456,469,509,530,g 785,447,454,469,473,g 788,446,451,454,455,g 791,447,451,464,467,r 794,435,461,466,468,g 797,411,425,462,476,g 800,408,425,447,455,r 803,415,419,447,452,g 806,413,415,419,421,g 809,382,387,415,421,g 812,381,387,397,402,r 815,356,379,397,402,g 818,362,368,379,381,g 821,363,368,410,412,r 824,400,405,410,412,g 827,393,402,404,410,g 830,389,402,414,435,r 833,402,414,415,445,r 836,400,413,414,438,r 839,380,390,414,420,g 842,383,390,391,393,r 845,386,390,409,410,r 848,400,409,424,429,r 851,407,409,424,447,g 854,403,408,428,456,r 857,408,415,428,437,g 860,413,415,418,421,g 863,388,395,418,419,g 866,388,395,413,421,r 869,389,394,413,422,g 872,392,394,399,400,r 875,342,350,399,411,g 878,335,338,339,343,g 881,328,334,339,344,g 884,292,330,332,335,g 887,324,331,362,365,r 890,350,354,362,391,g 893,327,354,376,380,r 896,363,367,369,370,r 899,353,361,369,370,g 902,342,352,361,369,g 905,345,349,352,361,g 908,296,312,349,353,g 911,284,307,312,315,g 914,309,313,314,336,r 917,308,313,334,339,r 920,328,331,334,345,g 923,322,331,362,371,r 926,352,353,362,385,g 929,324,342,353,354,g 933,339,343,346,347,g 936,333,338,343,346,g 940,313,322,338,339,g 943,306,322,364,375,r 946,340,343,364,373,g 949,318,340,343,345,g 952,349,351,357,361,g 955,347,352,377,387,r 958,374,377,403,406,r 961,402,403,423,432,r 964,400,407,423,432,g 967,387,393,407,412,g 970,393,394,402,403,r 973,393,395,424,427,r 976,422,423,424,442,r 979,407,415,424,428,g 982,412,415,436,440,r 985,423,425,436,453,g 988,415,423,424,427,r 991,420,423,424,426,r 994,393,395,423,424,g 997,371,374,395,400,g 1000,367,374,386,388,r 1003,369,386,392,397,r 1006,391,393,396,397,r 1009,393,396,402,403,r 1012,400,402,412,422,r 1015,392,402,412,417,g 1018,377,380,402,407,g 1021,377,380,407,416,r 1024,407,414,415,417,r 1027,407,414,419,423,r 1030,410,414,419,426,g 1033,392,393,414,419,g 1036,384,394,461,462,r 1039,461,462,477,491,r 1042,473,477,478,479,r 1045,456,459,477,483,g 1048,456,458,459,462,r 1051,456,459,469,473,r 1054,443,457,469,472,g 1057,443,457,476,478,r 1060,472,474,475,478,r 1063,472,474,475,478,r 1066,473,475,479,499,r 1069,477,479,483,488,r 1072,457,461,483,487,g 1075,450,455,461,462,g 1078,453,456,457,463,r 1081,453,454,455,466,r 1084,397,403,454,455,g 1087,376,404,407,409,r 1090,402,407,408,413,r 1093,399,403,406,410,g 1096,403,406,426,430,r 1099,409,425,426,430,r 1102,420,423,425,433,g 1105,388,393,423,425,g 1108,377,379,393,394,g 1111,342,347,379,384,g 1114,342,344,348,349,r 1117,335,348,358,361,r 1120,352,358,379,381,r 1123,370,379,380,392,r 1126,347,361,379,395,g 1129,343,360,361,380,r 1132,372,376,377,378,r 1135,369,373,377,381,g 1138,368,373,388,389,r 1141,379,388,398,400,r 1144,393,398,410,412,r 1147,409,410,411,428,r";

var rsi = "1,944 4,948 7,941 10,936 13,932 16,931 19,928 22,936 25,936 29,935 32,931 35,932 38,938 41,940 44,941 47,954 50,940 53,942 55,952 58,962 61,969 64,960 67,968 70,968 73,961 76,963 80,963 82,968 85,973 88,974 91,974 94,969 97,964 101,966 104,944 107,945 109,947 112,932 115,925 118,924 121,919 124,927 127,935 131,942 133,954 136,958 139,962 142,965 145,971 149,974 151,975 154,981 157,982 160,982 164,970 167,971 170,977 173,973 176,967 179,963 182,961 184,956 187,962 191,950 194,949 197,959 200,934 203,938 207,934 209,948 212,952 215,953 218,943 221,944 224,954 227,960 231,956 233,957 237,960 240,960 242,956 245,954 248,952 254,951 258,955 260,936 263,940 267,947 269,951 273,942 276,931 278,938 281,938 284,933 288,936 291,932 293,929 297,926 300,929 302,932 305,923 309,931 312,926 315,925 320,919 324,923 327,922 330,931 333,929 336,928 338,928 342,919 344,922 347,924 351,922 353,922 356,929 360,939 362,938 365,942 369,946 372,949 376,952 379,954 382,948 384,937 388,945 391,944 393,947 397,956 400,954 403,947 406,951 409,951 412,946 415,947 418,952 420,956 424,935 427,935 429,942 433,944 436,947 439,942 442,926 444,925 447,931 450,937 453,923 457,919 460,924 466,924 469,917 471,921 475,922 478,920 480,915 484,913 487,922 490,932 493,944 496,947 499,944 502,945 505,943 508,945 511,948 513,955 516,958 519,953 522,951 526,940 529,947 535,948 538,942 541,927 544,929 547,929 550,927 553,909 556,913 559,907 562,910 566,918 569,915 571,915 574,913 578,912 580,921 584,910 587,909 590,912 593,925 596,931 599,934 602,934 604,925 607,925 611,918 613,908 616,903 620,912 622,906 625,905 628,904 632,912 635,909 638,913 641,917 643,918 647,924 650,919 652,914 656,917 659,912 662,911 665,915 668,913 671,917 673,928 677,929 680,928 682,929 685,927 689,928 691,942 694,932 698,931 700,939 703,943 707,938 709,940 713,932 716,933 718,935 722,913 724,909 728,904 731,907 733,908 737,920 740,923 742,923 746,914 749,918 752,919 756,919 758,910 761,922 764,926 767,917 773,916 777,909 780,913 782,904 785,901 788,900 791,908 794,907 798,901 800,910 803,905 807,904 810,899 813,904 816,901 818,899 822,918 828,916 831,922 834,923 837,922 840,915 843,916 846,924 849,932 851,926 855,934 858,931 860,932 863,924 867,932 869,925 872,926 876,914 879,910 882,909 884,909 888,924 891,921 893,930 896,929 899,926 902,923 905,923 909,910 911,910 915,913 918,924 920,924 924,937 927,933 930,929 933,930 936,929 939,923 942,941 945,933 949,933 951,937 954,945 958,954 960,958 964,951 967,946 969,947 973,956 976,954 978,951 982,957 985,953 988,952 990,951 993,940 996,932 1000,936 1002,938 1005,941 1009,942 1011,946 1015,941 1018,932 1020,943 1024,947 1027,948 1030,945 1033,935 1036,958 1038,961 1042,961 1044,953 1048,954 1051,956 1053,951 1056,956 1060,955 1063,955 1066,958 1069,958 1071,947 1074,943 1080,943 1084,921 1087,922 1090,923 1093,921 1096,934 1099,934 1102,932 1104,921 1108,915 1111,907 1114,908 1117,914 1120,925 1123,925 1126,918 1129,918 1133,927 1136,926 1139,934 1142,939 1145,944 1147,945";

// trend lines and arrows: colour, width, dash, points
var lines = [
	["#008000", 2, "", "672,852 1864,345"],
	["#111", 1, "", "885,258 1187,503"],
	["#111", 1, "", "210,785 245,852"],
	["#e83030", 2, "20 9", "816,355 885,281"],
	["#f00", 1, "", "1144,429 1207,293"],
	["#f00", 1, "", "1220,285 1265,315"],
	["#f00", 1, "", "1282,323 1344,241"],
	["#666", 2, "21 9", "1136,318 1211,475"],
	["#666", 2, "21 9", "1223,479 1299,358"],
	["#666", 2, "21 9", "1308,351 1347,424"],
	["#666", 2, "21 9", "1364,434 1466,257"]
];
var heads = [
	["#e83030", "890,274 881,277 888,284"],
	["#f00", "1210,284 1202,290 1211,294"],
	["#f00", "1273,321 1263,320 1268,312"],
	["#f00", "1349,234 1340,238 1348,244"],
	["#666", "1208,479 1217,474 1216,485"],
	["#666", "1295,354 1303,350 1303,359"],
	["#666", "1346,434 1355,429 1355,439"],
	["#666", "1464,249 1472,244 1472,254"]
];
var labels = [
	["blue", 348, 790, "1"], ["blue", 480, 756, "[i]"], ["blue", 649, 587, "[iii]"], ["blue", 722, 709, "[iv]"],
	["blue", 912, 237, "3"], ["blue", 912, 269, "[v]"], ["blue", 1065, 525, "4"], ["blue", 1116, 325, "[i]"],
	["blue", 1153, 458, "[ii]"], ["blue", 1311, 225, "5"], ["red", 1374, 225, "(C) or (1)"],
	["gray", 1120, 299, "alt 2"], ["gray", 984, 475, "alt 1"], ["gray", 1246, 520, "flat 4"], ["gray", 1371, 477, "triangle 4"]
];

// a pane maps sheet units to its own pixels
function Pane(id, top, height) {
	this.svg = document.getElementById(id);
	this.w = this.svg.clientWidth;
	this.h = this.svg.clientHeight;
	this.right = this.w - AXIS;
	this.sx = this.right / SHEET;
	this.sy = this.h / height;
	this.top = top;
	this.out = "";
}
Pane.prototype.x = function(x) { return Math.round(x * this.sx); };
Pane.prototype.y = function(y) { return Math.round((y - this.top) * this.sy); };
Pane.prototype.pts = function(s) {
	var p = this;
	return s.split(" ").map(function(a) {
		var c = a.split(",");
		return (p.x(+c[0]) + 0.5) + "," + (p.y(+c[1]) + 0.5);
	}).join(" ");
};
Pane.prototype.hline = function(y, cls, extra) {
	this.out += '<path class="sharp ' + cls + '" d="M1 ' + (this.y(y) + 0.5) + "H" + this.right + '" ' + (extra || "") + "/>";
};
Pane.prototype.vlines = function(bottom) {
	for (var i = 0; i < months.length; i++) {
		var cls = months[i][1] > "2000" && months[i][1] < "3000" ? "grid-major" : "grid";
		this.out += '<path class="sharp ' + cls + '" d="M' + (this.x(months[i][0]) + 0.5) + " 1V" + this.y(bottom) + '"/>';
	}
};
Pane.prototype.tick = function(y, len, text, bold) {
	var py = this.y(y);
	this.out += '<path class="sharp tick" d="M' + this.right + " " + (py + 0.5) + "h" + len + '"/>';
	if (text) this.text(this.right + 8, py + 4, text, bold ? "axis-bold" : "");
};
Pane.prototype.text = function(x, y, text, cls, anchor) {
	this.out += '<text x="' + x + '" y="' + y + '" class="' + cls + '" text-anchor="' + (anchor || "start") + '">' + text + "</text>";
};
Pane.prototype.line = function(l) {
	this.out += '<polyline fill="none" stroke="' + l[0] + '" stroke-width="' + l[1] + '" stroke-dasharray="' + l[2] + '" points="' + this.pts(l[3]) + '"/>';
};
Pane.prototype.head = function(a) {
	this.out += '<polygon fill="' + a[0] + '" points="' + this.pts(a[1]) + '"/>';
};
Pane.prototype.back = function(id, from, to, bottom) {
	this.out += '<linearGradient id="' + id + '" x2="0" y2="1"><stop stop-color="' + from + '"/><stop offset="1" stop-color="' + to + '"/></linearGradient>'
		+ '<rect width="' + this.right + '" height="' + (this.y(bottom)) + '" fill="url(#' + id + ')"/>';
};
Pane.prototype.frame = function(bottom) {
	this.out += '<path class="sharp frame" d="M0.5 0.5H' + (this.right + 0.5) + "V" + (this.y(bottom) + 0.5) + 'H0.5z"/>';
};

// log scale
function priceY(p) {
	return 521 - 4731 * Math.log(p / 1.15);
}

function drawPrice() {
	var p = new Pane("price", 70, 785), i;
	p.back("sky", "#ffffff", "#dfe7ff", 852);
	p.vlines(852);
	for (i = 1075; i <= 1260; i += 5) p.hline(priceY(i / 1000), i % 50 ? "grid" : "grid-major");
	p.text(p.x(806), p.y(530), "ewc.space", "mark-big");
	p.text(p.x(1686), p.y(97), "ewc.space", "mark-small");
	[[1.20928, 283], [1.17128, 434], [1.1554, 499]].forEach(function(l) {
		p.hline(l[1], "level");
		p.text(p.right - 1, p.y(l[1]) - 3, l[0], "level-text", "end");
	});

	var black = "", fill = {g: "", r: ""};
	candles.split(" ").forEach(function(s) {
		var c = s.split(","), x = p.x(+c[0]), hi = p.y(+c[1]), t = p.y(+c[2]), b = p.y(+c[3]), lo = p.y(+c[4]);
		black += "M" + x + " " + hi + "h1V" + (lo + 1) + "h-1zM" + (x - 1) + " " + t + "h3V" + (b + 1) + "h-3z";
		if (b - t > 1) fill[c[5]] += "M" + x + " " + (t + 1) + "h1V" + b + "h-1z";
	});
	p.out += '<path class="sharp" d="' + black + '"/><path class="sharp" fill="#4fe05a" d="' + fill.g + '"/><path class="sharp" fill="#f0706c" d="' + fill.r + '"/>';

	lines.forEach(p.line, p);
	heads.forEach(p.head, p);
	labels.forEach(function(l) { p.text(p.x(l[1]), p.y(l[2]), l[3], l[0], "middle"); });
	p.frame(852);

	for (i = 1075; i <= 1260; i += 5) p.tick(priceY(i / 1000), 4, String(i / 1000), i % 50 == 0);
	var y = p.y(409);
	p.out += '<path d="M' + p.right + " " + (y + 0.5) + 'h5" stroke="#000"/>'
		+ '<linearGradient id="gold" x2="0" y2="1"><stop stop-color="#ffe23a"/><stop offset="1" stop-color="#f0b400"/></linearGradient>'
		+ '<rect x="' + (p.right + 5.5) + '" y="' + (y - 7.5) + '" width="42" height="15" fill="url(#gold)" stroke="#8a8a60"/>';
	p.text(p.right + 7, y + 4, "1.17739", "");
	p.svg.innerHTML = p.out;
}

function drawRsi() {
	var p = new Pane("rsi", 855, 165), y;
	p.back("dusk", "#e0e8ff", "#d9e4ff", 1019);
	p.vlines(1019);
	[[863, "grid-major"], [893, "grid"], [923, "grid"], [952, "grid"], [982, "grid"], [1012, "grid-major"]].forEach(function(l) { p.hline(l[0], l[1]); });

	var area = p.pts("1,938 " + rsi + " 1147,938");
	p.out += '<clipPath id="over"><rect width="' + p.w + '" height="' + p.y(908) + '"/></clipPath>'
		+ '<clipPath id="under"><rect y="' + p.y(968) + '" width="' + p.w + '" height="' + p.h + '"/></clipPath>'
		+ '<polygon clip-path="url(#over)" fill="#b8a0c8" points="' + area + '"/>'
		+ '<polygon clip-path="url(#under)" fill="#9cc0b2" points="' + area + '"/>';
	p.hline(893, "", 'stroke="#d0103a" stroke-dasharray="20 8"');
	p.hline(982, "", 'stroke="#10c840" stroke-dasharray="20 8"');
	p.hline(908, "", 'stroke="#000"');
	p.hline(967, "", 'stroke="#000"');
	p.out += '<polyline class="rsi-line" points="' + p.pts(rsi) + '"/>';
	p.line(["#e83030", 2, "20 9", "166,998 252,971"]);
	p.line(["#e83030", 2, "20 9", "812,887 908,906"]);
	p.head(["#e83030", "260,967 250,965 253,974"]);
	p.head(["#e83030", "917,908 908,910 911,901"]);
	p.frame(1019);

	[[863, "100", 1], [878], [893, "80"], [908], [923, "60"], [938], [952, "40"], [967], [982, "20"], [997], [1012, "0", 1]].forEach(function(t) {
		p.tick(t[0], t[1] ? 4 : 2, t[1], t[2]);
	});
	y = p.y(944);
	p.out += '<path d="M' + p.right + " " + (y + 0.5) + 'h5" stroke="#00009c"/>'
		+ '<rect x="' + (p.right + 5.5) + '" y="' + (y - 7.5) + '" width="36" height="15" fill="#e8eefa" stroke="#6f8794"/>';
	p.out += '<text x="' + (p.right + 7) + '" y="' + (y + 4) + '" fill="#00009c">45.890</text>';
	p.svg.innerHTML = p.out;
}

function drawTime() {
	var p = new Pane("time", 0, 20);
	months.forEach(function(m) {
		var x = p.x(m[0]), year = m[1] > "2000" && m[1] < "3000";
		p.out += '<path class="sharp tick" d="M' + (x + 0.5) + ' 0v4"/>';
		p.text(x + 1, 16, m[1], year ? "axis-bold" : "", "middle");
	});
	p.svg.innerHTML = p.out;
}

function draw() {
	drawPrice();
	drawRsi();
	drawTime();
}

var palette = document.getElementById("palette");
colors.forEach(function(c, i) {
	var b = document.createElement("button");
	b.title = c;
	b.style.backgroundColor = c;
	if (i == 15) b.className = "current";
	palette.appendChild(b);
});

window.addEventListener("resize", draw);
draw();
```
